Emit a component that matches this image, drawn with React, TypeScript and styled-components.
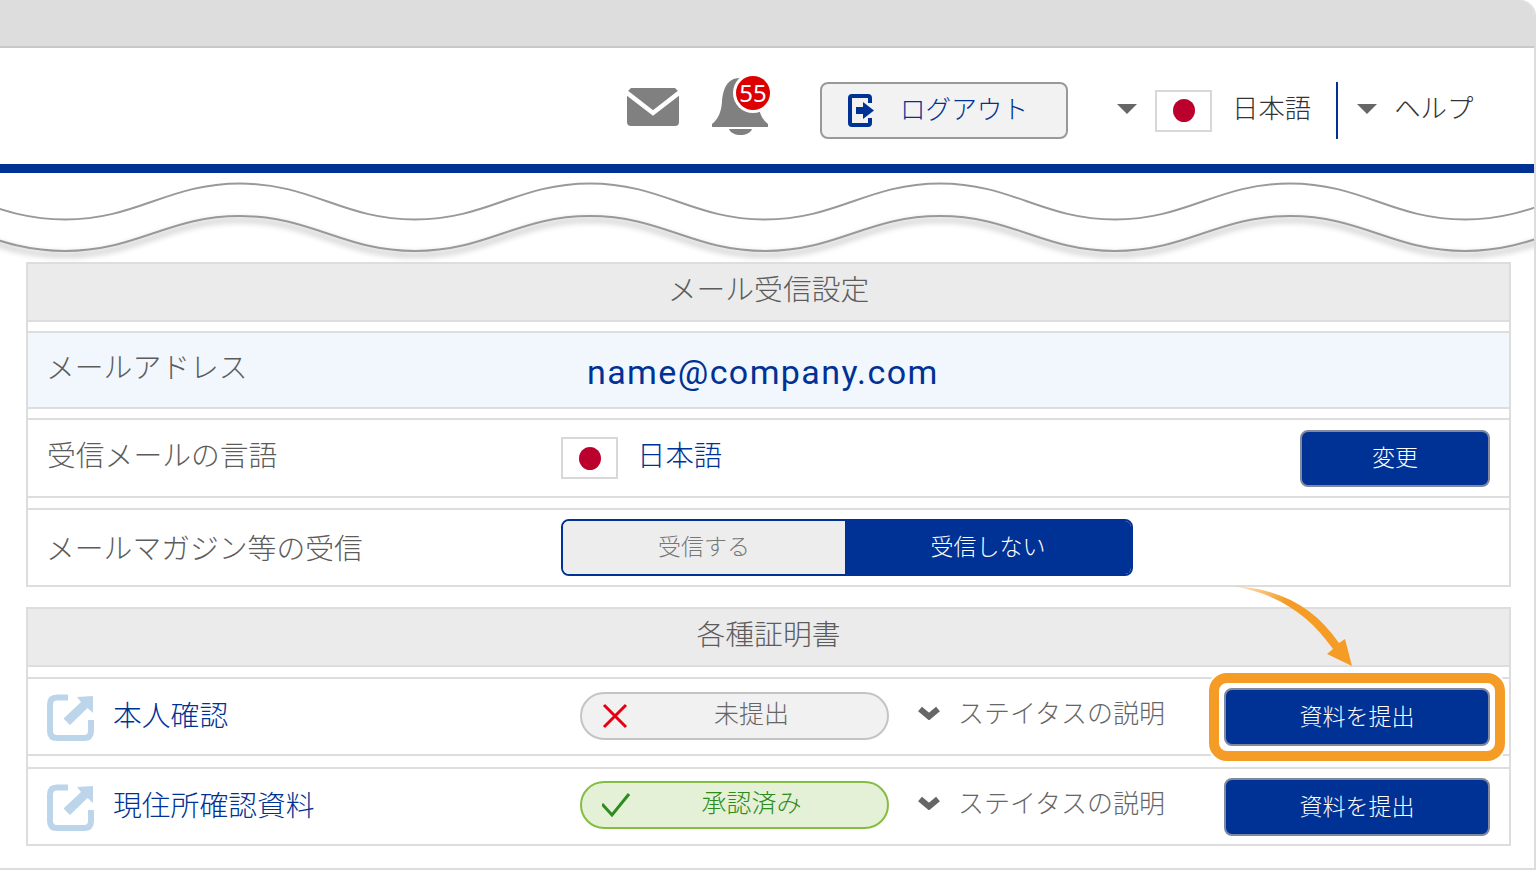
import React from 'react';
import styled, { createGlobalStyle } from 'styled-components';

const BLUE = '#003296';
const FONT = '"Noto Sans CJK JP", "Noto Sans", sans-serif';

const GlobalStyle = createGlobalStyle`
  html, body { margin: 0; padding: 0; background: #fff; }
  body { font-family: ${FONT}; font-weight: 300; color: #5c5c5c; overflow: hidden; }
  * { box-sizing: border-box; }
`;

const Frame = styled.div`
  width: 1536px;
  height: 870px;
  background: #fff;
  border-right: 2px solid #ddd;
  border-bottom: 2px solid #ddd;
  border-top-right-radius: 16px;
  overflow: hidden;
`;

const TopBar = styled.div`
  height: 48px;
  background: #ddd;
  border-bottom: 2px solid #c8c8c8;
`;

const Header = styled.header`
  height: 116px;
  display: flex;
  align-items: center;
  padding: 9px 0 0 627px;
`;

const AlertIcons = styled.div`
  display: flex;
  align-items: center;
  gap: 32px;
  margin-bottom: 7px;
`;

const Nav = styled.nav`
  display: flex;
  align-items: center;
  margin-left: 49px;
`;

const NavMenu = styled.div<{ $gap: number }>`
  display: flex;
  align-items: center;
  gap: ${(p) => p.$gap}px;
`;

const BlueBar = styled.div`
  height: 9px;
  background: ${BLUE};
`;

const WaveSvg = styled.svg`
  display: block;
  width: 1534px;
  height: 89px;
`;

const WaveLine = styled.path<{ $shadow?: boolean }>`
  fill: none;
  stroke: #999;
  stroke-width: 2;
  ${(p) => p.$shadow && 'filter: drop-shadow(0 4px 3px rgba(0, 0, 0, 0.45));'}
`;

const BellWrap = styled.div`
  position: relative;
  width: 58px;
  height: 58px;
`;

const Badge = styled.span`
  position: absolute;
  left: 25px;
  top: -2px;
  width: 34px;
  height: 34px;
  border-radius: 50%;
  background: #dc0000;
  box-shadow: 0 0 0 3px #fff;
  color: #fff;
  font-family: "Noto Sans", sans-serif;
  font-size: 24px;
  font-weight: 400;
  line-height: 34px;
  text-align: center;
`;

const LogoutButton = styled.button`
  width: 248px;
  height: 57px;
  margin-left: 51px;
  padding: 0 0 0 26px;
  display: flex;
  align-items: center;
  gap: 25px;
  background: #f2f2f2;
  border: 2px solid #999;
  border-radius: 8px;
  color: ${BLUE};
  font-family: ${FONT};
  font-weight: 300;
  font-size: 25.6px;
`;

const LogoutLabel = styled.span`
  padding-bottom: 6px;
  white-space: nowrap;
`;

const Caret = styled.span`
  width: 0;
  height: 0;
  margin-bottom: 3px;
  border-left: 10px solid transparent;
  border-right: 10px solid transparent;
  border-top: 10px solid #666;
`;

const Flag = styled.span`
  flex: none;
  width: 57px;
  height: 42px;
  display: flex;
  align-items: center;
  justify-content: center;
  background: #fff;
  border: 2px solid #d8d8d8;

  &::after {
    content: '';
    width: 22px;
    height: 23px;
    border-radius: 50%;
    background: #bc002d;
  }
`;

const NavText = styled.span`
  padding: 0 0 7px 2px;
  color: #333;
  font-size: 26.4px;
  line-height: 40px;
  white-space: nowrap;
`;

const NavDivider = styled.span`
  width: 2px;
  height: 57px;
  margin: 0 19px 0 25px;
  background: ${BLUE};
`;

const Content = styled.main`
  padding: 0 23px 0 26px;
`;

const Section = styled.section`
  margin-bottom: 20px;
  border: 2px solid #ddd;
  border-bottom: 0;
`;

const SectionHead = styled.h2`
  height: 58px;
  margin: 0;
  padding-bottom: 9px;
  display: flex;
  align-items: center;
  justify-content: center;
  background: #ebebeb;
  border-bottom: 2px solid #ddd;
  color: #5c5c5c;
  font-size: 28.8px;
  font-weight: 300;
`;

const Row = styled.div<{ $h: number; $gap: number; $tint?: boolean }>`
  height: ${(p) => p.$h}px;
  margin-top: ${(p) => p.$gap}px;
  padding: 0 19px;
  display: flex;
  align-items: center;
  background: ${(p) => (p.$tint ? '#f1f7fd' : '#fff')};
  border-top: 2px solid #ddd;
  border-bottom: 2px solid #ddd;
`;

// labels starting with katakana sit 1px further out because of the side bearing
const Label = styled.span<{ $lift: number; $kana?: boolean }>`
  flex: none;
  width: ${(p) => (p.$kana ? 515 : 514)}px;
  margin-left: ${(p) => (p.$kana ? -1 : 0)}px;
  padding-bottom: ${(p) => p.$lift}px;
  font-size: 28.8px;
  white-space: nowrap;
`;

const Email = styled.span`
  margin-left: 26px;
  padding-top: 3px;
  color: ${BLUE};
  font-family: Roboto, sans-serif;
  font-size: 34px;
  font-weight: 400;
  letter-spacing: 1.4px;
`;

const LangValue = styled.span`
  margin-left: 19px;
  padding-bottom: 10px;
  color: ${BLUE};
  font-size: 28.4px;
`;

const PrimaryButton = styled.button<{ $w: number; $h: number }>`
  flex: none;
  width: ${(p) => p.$w}px;
  height: ${(p) => p.$h}px;
  padding: 0 0 4px;
  background: ${BLUE};
  border: 2px solid #808a9e;
  border-radius: 8px;
  color: #fff;
  font-family: ${FONT};
  font-size: 23px;
  font-weight: 300;
`;

const ChangeSlot = styled.div`
  margin-left: auto;
`;

const Toggle = styled.div`
  flex: none;
  width: 572px;
  height: 57px;
  display: flex;
  border-radius: 8px;
  overflow: hidden;
  border: 2px solid ${BLUE};
`;

const ToggleOption = styled.span<{ $active?: boolean }>`
  flex: ${(p) => (p.$active ? '0 0 286px' : '1')};
  padding-bottom: 6px;
  display: flex;
  align-items: center;
  justify-content: center;
  background: ${(p) => (p.$active ? BLUE : '#ededed')};
  color: ${(p) => (p.$active ? '#fff' : '#777')};
  font-size: 23px;
`;

const CertIcon = styled.svg`
  flex: none;
  width: 47px;
  height: 47px;
  margin-top: 2px;
`;

const CertName = styled.a`
  flex: none;
  width: 486px;
  padding: 0 0 6px 19px;
  color: ${BLUE};
  font-size: 28.8px;
  white-space: nowrap;
`;

const Pill = styled.div<{ $ok?: boolean; $lift: number }>`
  flex: none;
  width: 309px;
  height: 48px;
  margin-bottom: ${(p) => p.$lift}px;
  padding: 0 18px 0 20px;
  display: flex;
  align-items: center;
  border-radius: 24px;
  background: ${(p) => (p.$ok ? '#e5f1d6' : '#f1f1f1')};
  border: 2px solid ${(p) => (p.$ok ? '#85bd42' : '#c4c4c4')};
  color: ${(p) => (p.$ok ? '#2e8b1e' : '#666')};
  font-size: 25px;
`;

const PillIcon = styled.svg`
  flex: none;
  width: 32px;
  height: 26px;
`;

const PillText = styled.span`
  flex: 1;
  padding-bottom: 8px;
  text-align: center;
  white-space: nowrap;
`;

const Chevron = styled.svg`
  flex: none;
  width: 22px;
  height: 14px;
  margin: 0 0 8px 29px;
`;

const StatusHelp = styled.span`
  margin-left: 18px;
  padding-bottom: 10px;
  color: #666;
  font-size: 26px;
  white-space: nowrap;
`;

const SubmitSlot = styled.div`
  margin-left: auto;
  position: relative;
  display: flex;
`;

const Highlight = styled.div`
  position: absolute;
  inset: -15px;
  border: 10px solid #f49c25;
  border-radius: 18px;
  background: #fff;
  box-shadow: 0 0 0 2px #fff;
`;

const SubmitWrap = styled.div`
  position: relative;
  display: flex;
`;

const Arrow = styled.svg`
  position: absolute;
  left: 6px;
  top: -104px;
  width: 125px;
  height: 84px;
`;

const wavePath = (crest: number, trough: number) => {
  let d = `M-110 ${crest}`;
  let x = -110;
  let y = crest;
  while (x < 1600) {
    const next = y === crest ? trough : crest;
    d += ` C${x + 72} ${y} ${x + 103} ${next} ${x + 175} ${next}`;
    x += 175;
    y = next;
  }
  return d;
};

const ExternalIcon = () => (
  <CertIcon viewBox="0 0 47 47">
    <path d="M21 3.5H10Q3 3.500 3 10.500V37Q3 44 10 44H37Q44 44 44 37V26" fill="none" stroke="#bcd5ea" strokeWidth="6" />
    <path d="M30 3L46 2V19L40.500 14L23 31L16.500 24.500L34 8Z" fill="#bcd5ea" />
  </CertIcon>
);

const ChevronIcon = () => (
  <Chevron viewBox="0 0 22 14">
    <path d="M2 3L11 10.500L20 3" fill="none" stroke="#666" strokeWidth="6" />
  </Chevron>
);

const SubmitButton = () => (
  <PrimaryButton $w={266} $h={58}>資料を提出</PrimaryButton>
);

export default function App() {
  return (
    <>
      <GlobalStyle />
      <Frame>
        <TopBar />
        <Header>
          <AlertIcons>
            <svg width="52" height="38" viewBox="0 0 52 38">
              <path d="M4 0H48L52 4V34Q52 38 48 38H4Q0 38 0 34V4Z" fill="#808080" />
              <path d="M-1 4L26 25L53 4" fill="none" stroke="#fff" strokeWidth="4.500" />
            </svg>
            <BellWrap>
              <svg width="58" height="58" viewBox="0 0 58 58">
                <path d="M29 0C16 0 12 11 11 24C10 36 6 42 1 46V49H57V46C52 42 48 36 47 24C46 11 42 0 29 0Z" fill="#808080" />
                <path d="M18 51H41C38 59 21 59 18 51Z" fill="#808080" />
              </svg>
              <Badge>55</Badge>
            </BellWrap>
          </AlertIcons>
          <LogoutButton>
            <svg width="27" height="33" viewBox="0 0 27 33">
              <path d="M22 9V4Q22 2 20 2H4Q2 2 2 4V29Q2 31 4 31H20Q22 31 22 29V24" fill="none" stroke={BLUE} strokeWidth="4" />
              <path d="M8 13H15V8L26 16.500L15 25V20H8Z" fill={BLUE} />
            </svg>
            <LogoutLabel>ログアウト</LogoutLabel>
          </LogoutButton>
          <Nav>
            <NavMenu $gap={18}>
              <Caret />
              <Flag />
              <NavText>日本語</NavText>
            </NavMenu>
            <NavDivider />
            <NavMenu $gap={15}>
              <Caret />
              <NavText>ヘルプ</NavText>
            </NavMenu>
          </Nav>
        </Header>
        <BlueBar />
        <WaveSvg viewBox="0 0 1534 89">
          <WaveLine d={wavePath(10.5, 46.5)} />
          <WaveLine $shadow d={wavePath(43, 78)} />
        </WaveSvg>
        <Content>
          <Section>
            <SectionHead>メール受信設定</SectionHead>
            <Row $h={78} $gap={9} $tint>
              <Label $lift={10} $kana>メールアドレス</Label>
              <Email>name@company.com</Email>
            </Row>
            <Row $h={80} $gap={9}>
              <Label $lift={10}>受信メールの言語</Label>
              <Flag />
              <LangValue>日本語</LangValue>
              <ChangeSlot>
                <PrimaryButton $w={190} $h={57}>変更</PrimaryButton>
              </ChangeSlot>
            </Row>
            <Row $h={79} $gap={10}>
              <Label $lift={2} $kana>メールマガジン等の受信</Label>
              <Toggle>
                <ToggleOption>受信する</ToggleOption>
                <ToggleOption $active>受信しない</ToggleOption>
              </Toggle>
            </Row>
          </Section>
          <Section>
            <SectionHead>各種証明書</SectionHead>
            <Row $h={79} $gap={10}>
              <ExternalIcon />
              <CertName>本人確認</CertName>
              <Pill $lift={2}>
                <PillIcon viewBox="0 0 32 26">
                  <path d="M2 2L24 24M24 2L2 24" fill="none" stroke="#e60012" strokeWidth="3" />
                </PillIcon>
                <PillText>未提出</PillText>
              </Pill>
              <ChevronIcon />
              <StatusHelp>ステイタスの説明</StatusHelp>
              <SubmitSlot>
                <Highlight />
                <SubmitWrap>
                  <SubmitButton />
                </SubmitWrap>
                <Arrow viewBox="0 0 125 84">
                  <defs>
                    <linearGradient id="arrowFade" x1="0" y1="0" x2="55" y2="20" gradientUnits="userSpaceOnUse">
                      <stop offset="0" stopColor="#f49c25" stopOpacity="0.15" />
                      <stop offset="1" stopColor="#f49c25" />
                    </linearGradient>
                  </defs>
                  <path d="M2 2C50 4 85 24 109 59L115 55L122 82L97 70L103 65C80 32 50 10 2 2Z" fill="url(#arrowFade)" />
                </Arrow>
              </SubmitSlot>
            </Row>
            <Row $h={79} $gap={11}>
              <ExternalIcon />
              <CertName>現住所確認資料</CertName>
              <Pill $ok $lift={4}>
                <PillIcon viewBox="0 0 32 26">
                  <path d="M0 12L10 23L27 2" fill="none" stroke="#2e8b1e" strokeWidth="3" />
                </PillIcon>
                <PillText>承認済み</PillText>
              </Pill>
              <ChevronIcon />
              <StatusHelp>ステイタスの説明</StatusHelp>
              <SubmitSlot>
                <SubmitButton />
              </SubmitSlot>
            </Row>
          </Section>
        </Content>
      </Frame>
    </>
  );
}
